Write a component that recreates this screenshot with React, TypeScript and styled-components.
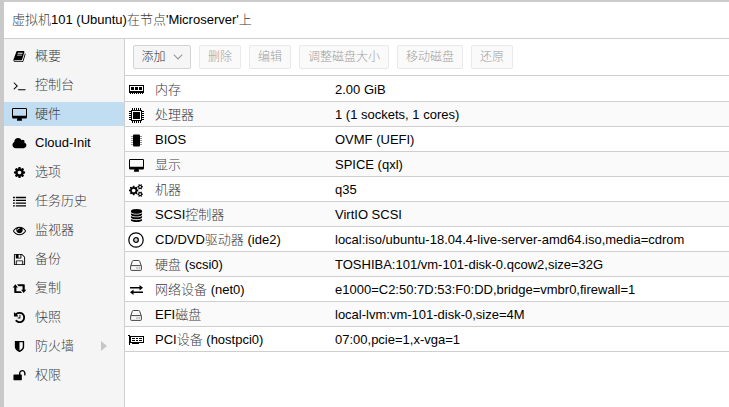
import React from "react";
import styled, { createGlobalStyle } from "styled-components";

const GlobalStyle = createGlobalStyle`
  * { box-sizing: border-box; }
  body {
    margin: 0;
    background: #fff;
    color: #000;
    font: 13px/20px "Liberation Sans", Arial, "Noto Sans CJK SC", sans-serif;
    overflow: hidden;
  }
`;

const Frame = styled.div`
  width: 729px;
  height: 407px;
  display: flex;
  flex-direction: column;
  border-top: 2px solid #cbcbcb;
  border-left: 4px solid #c9c9c9;
  background: #fff;
`;

const Title = styled.header`
  flex: 0 0 37px;
  display: flex;
  align-items: center;
  padding: 0 8px;
  border-bottom: 1px solid #cfcfcf;
  white-space: pre;
`;

const Body = styled.div`
  flex: 1;
  min-height: 0;
  display: flex;
`;

const Sidebar = styled.nav`
  flex: 0 0 121px;
  display: flex;
  flex-direction: column;
  gap: 5px;
  padding-top: 5px;
  background: #f5f5f5;
  border-right: 1px solid #cfcfcf;
`;

const NavItem = styled.div<{ $active?: boolean }>`
  display: flex;
  align-items: center;
  height: 24px;
  background: ${(p) => (p.$active ? "#c1ddf1" : "transparent")};
`;

const NavIcon = styled.span`
  flex: 0 0 31px;
  display: flex;
  justify-content: center;
  svg { display: block; }
`;

const Expander = styled.span`
  margin-left: auto;
  margin-right: 17px;
  border: solid transparent;
  border-width: 5px 0 5px 6px;
  border-left-color: #c6c6c6;
`;

const Main = styled.main`
  flex: 1;
  min-width: 0;
`;

const Toolbar = styled.div`
  display: flex;
  align-items: center;
  gap: 8px;
  height: 37px;
  padding: 0 8px;
  border-bottom: 1px solid #cfcfcf;
`;

const Button = styled.button<{ $width: number }>`
  display: flex;
  align-items: center;
  justify-content: center;
  gap: 7px;
  width: ${(p) => p.$width}px;
  height: 24px;
  padding: 0;
  border: 1px solid #d4d4d4;
  border-radius: 2px;
  background: #f6f6f6;
  color: #333;
  font: 300 12px/22px "Liberation Sans", "Noto Sans CJK SC", sans-serif;
  white-space: nowrap;
  &:disabled {
    border-color: #e9e9e9;
    background: #fafafa;
    color: #a0a0a0;
  }
`;

const Row = styled.div`
  display: grid;
  grid-template-columns: 22px 188px 1fr;
  align-items: center;
  height: 25px;
  padding-top: 2px;
  border-bottom: 1px solid #cfcfcf;
  white-space: pre;
  &:first-child { height: 26px; }
  &:nth-child(even) { background: #fafafa; }
`;

const RowIcon = styled.span`
  display: flex;
  justify-content: center;
  svg { display: block; }
`;

const RowLabel = styled.span`
  padding-left: 8px;
`;

const Value = styled.span`
  display: inline-block;
`;

const Han = styled.span`
  font-weight: 300;
  color: #3c3c3c;
`;

/* Han runs are set lighter than the Latin ones. */
function Mixed({ text }: { text: string }) {
  return (
    <span>
      {text.split(/([\u4e00-\u9fff]+)/).map((part, i) =>
        i % 2 ? <Han key={i}>{part}</Han> : part
      )}
    </span>
  );
}

const GLYPHS = {
  book: "M1703 478q40 57 18 129l-275 906q-19 64-76.5 107.5t-122.5 43.5h-923q-77 0-148.5-53.5t-99.5-131.5q-24-67-2-127 0-4 3-27t4-37q1-8-3-21.5t-3-19.500q2-11 8-21t16.500-23.500 16.500-23.500q23-38 45-91.500t30-91.500q3-10 .5-30t-.5-28q3-11 17-28t17-23q21-36 42-92t25-90q1-9-2.500-32t.5-28q4-13 22-30.500t22-22.500q19-26 42.500-84.500t27.500-96.500q1-8-3-25.500t-2-26.500q2-8 9-18t18-23 17-21q8-12 16.500-30.500t15-35 16-36 19.500-32 26.500-23.500 36-11.500 47.500 5.500l-1 3q38-9 51-9h761q74 0 114 56t18 130l-274 906q-36 119-71.500 153.500t-128.500 34.500h-869q-27 0-38 15-11 16-1 43 24 70 144 70h923q29 0 56-15.500t35-41.500l300-987q7-22 5-57 38 15 59 43zm-1064 2q-4 13 2 22.500t20 9.500h608q13 0 25.500-9.500t16.500-22.500l21-64q4-13-2-22.500t-20-9.500h-608q-13 0-25.500 9.500t-16.500 22.500zm-83 256q-4 13 2 22.500t20 9.500h608q13 0 25.500-9.500t16.500-22.500l21-64q4-13-2-22.500t-20-9.500h-608q-13 0-25.500 9.500t-16.500 22.500z",
  terminal: "M649 983l-466 466q-10 10-23 10t-23-10l-50-50q-10-10-10-23t10-23l393-393-393-393q-10-10-10-23t10-23l50-50q10-10 23-10t23 10l466 466q10 10 10 23t-10 23zm1079 457v64q0 14-9 23t-23 9h-960q-14 0-23-9t-9-23v-64q0-14 9-23t23-9h960q14 0 23 9t9 23z",
  cloud: "M1984 1152q0 159-112.5 271.5t-271.5 112.5h-1088q-185 0-316.5-131.5t-131.5-316.5q0-132 71-241.500t187-163.500q-2-28-2-43 0-212 150-362t362-150q158 0 286.500 88t187.500 230q70-62 166-62 106 0 181 75t75 181q0 75-41 138 129 30 213 134.500t84 239.500z",
  cog: "M1152 896q0-106-75-181t-181-75-181 75-75 181 75 181 181 75 181-75 75-181zm512-109v222q0 12-8 23t-20 13l-185 28q-19 54-39 91 35 50 107 138 10 12 10 25t-9 23q-27 37-99 108t-94 71q-12 0-26-9l-138-108q-44 23-91 38-16 136-29 186-7 28-36 28h-222q-14 0-24.5-8.500t-11.500-21.500l-28-184q-49-16-90-37l-141 107q-10 9-25 9-14 0-25-11-126-114-165-168-7-10-7-23 0-12 8-23 15-21 51-66.500t54-70.500q-27-50-41-99l-183-27q-13-2-21-12.500t-8-23.500v-222q0-12 8-23t19-13l186-28q14-46 39-92-40-57-107-138-10-12-10-24 0-10 9-23 26-36 98.500-107.500t94.500-71.500q13 0 26 10l138 107q44-23 91-38 16-136 29-186 7-28 36-28h222q14 0 24.500 8.500t11.500 21.500l28 184q49 16 90 37l142-107q9-9 24-9 13 0 25 10 129 119 165 170 7 8 7 22 0 12-8 23-15 21-51 66.500t-54 70.500q26 50 41 98l183 28q13 2 21 12.500t8 23.500z",
  cogs: "M896 896q0-106-75-181t-181-75-181 75-75 181 75 181 181 75 181-75 75-181zm768 512q0-52-38-90t-90-38-90 38-38 90q0 53 37.5 90.5t90.5 37.5 90.5-37.5 37.5-90.5zm0-1024q0-52-38-90t-90-38-90 38-38 90q0 53 37.5 90.5t90.5 37.5 90.5-37.5 37.5-90.5zm-384 421v185q0 10-7 19.5t-16 10.5l-155 24q-11 35-32 76 34 48 90 115 7 11 7 20 0 12-7 19-23 30-82.5 89.5t-78.5 59.5q-11 0-21-7l-115-90q-37 19-77 31-11 108-23 155-7 24-30 24h-186q-11 0-20-7.5t-10-17.5l-23-153q-34-10-75-31l-118 89q-7 7-20 7-11 0-21-8-144-133-144-160 0-9 7-19 10-14 41-53t47-61q-23-44-35-82l-152-24q-10-1-17-9.5t-7-19.5v-185q0-10 7-19.5t16-10.5l155-24q11-35 32-76-34-48-90-115-7-11-7-20 0-12 7-20 22-30 82-89t79-59q11 0 21 7l115 90q34-18 77-32 11-108 23-154 7-24 30-24h186q11 0 20 7.5t10 17.5l23 153q34 10 75 31l118-89q8-7 20-7 11 0 21 8 144 133 144 160 0 8-7 19-12 16-42 54t-45 60q23 48 34 82l152 23q10 2 17 10.5t7 19.5zm640 533v140q0 16-149 31-12 27-30 52 51 113 51 138 0 4-4 7-122 71-124 71-8 0-46-47t-52-68q-20 2-30 2t-30-2q-14 21-52 68t-46 47q-2 0-124-71-4-3-4-7 0-25 51-138-18-25-30-52-149-15-149-31v-140q0-16 149-31 13-29 30-52-51-113-51-138 0-4 4-7 4-2 35-20t59-34 30-16q8 0 46 46.500t52 67.500q20-2 30-2t30 2q51-71 92-112l6-2q4 0 124 70 4 3 4 7 0 25-51 138 17 23 30 52 149 15 149 31zm0-1024v140q0 16-149 31-12 27-30 52 51 113 51 138 0 4-4 7-122 71-124 71-8 0-46-47t-52-68q-20 2-30 2t-30-2q-14 21-52 68t-46 47q-2 0-124-71-4-3-4-7 0-25 51-138-18-25-30-52-149-15-149-31v-140q0-16 149-31 13-29 30-52-51-113-51-138 0-4 4-7 4-2 35-20t59-34 30-16q8 0 46 46.500t52 67.500q20-2 30-2t30 2q51-71 92-112l6-2q4 0 124 70 4 3 4 7 0 25-51 138 17 23 30 52 149 15 149 31z",
  list: "M0 256h256v192H0zM384 256h1408v192H384zM0 640h256v192H0zM384 640h1408v192H384zM0 1024h256v192H0zM384 1024h1408v192H384zM0 1408h256v192H0zM384 1408h1408v192H384z",
  eye: "M1664 960q-152-236-381-353 61 104 61 225 0 185-131.5 316.5t-316.5 131.5-316.5-131.5-131.5-316.5q0-121 61-225-229 117-381 353 133 205 333.5 326.5t434.5 121.5 434.5-121.5 333.5-326.5zm-720-384q0-20-14-34t-34-14q-125 0-214.5 89.500t-89.500 214.500q0 20 14 34t34 14 34-14 14-34q0-86 61-147t147-61q20 0 34-14t14-34zm848 384q0 34-20 69-140 230-376.500 368.500t-499.500 138.500-499.500-139-376.500-368q-20-35-20-69t20-69q140-229 376.500-368t499.500-139 499.500 139 376.500 368q20 35 20 69z",
  save: "M512 1536h768v-384h-768v384zm896 0h128v-896q0-14-10-38.500t-20-34.500l-281-281q-10-10-34-20t-39-10v416q0 40-28 68t-68 28h-576q-40 0-68-28t-28-68v-416h-128v1280h128v-416q0-40 28-68t68-28h832q40 0 68 28t28 68v416zm-384-928v-320q0-13-9.500-22.500t-22.500-9.500h-192q-13 0-22.500 9.500t-9.500 22.500v320q0 13 9.500 22.500t22.500 9.500h192q13 0 22.500-9.500t9.500-22.500zm640 32v928q0 40-28 68t-68 28h-1344q-40 0-68-28t-28-68v-1344q0-40 28-68t68-28h928q40 0 88 20t76 48l280 280q28 28 48 76t20 88z",
  retweet: "M320 320L-40 760h210v660q0 90 90 90h1000l-200-250H470V760h210zM560 320l200 250h560v500h-210l360 440 360-440h-210V410q0-90-90-90z",
  history: "M1664 896q0 156-61 298t-164 245-245 164-298 61q-172 0-327-72.500t-264-204.500q-7-10-6.500-22.500t8.500-20.500l137-138q10-9 25-9 16 2 23 12 73 95 179 147t225 52q104 0 198.500-40.500t163.500-109.500 109.500-163.500 40.500-198.500-40.500-198.500-109.500-163.500-163.500-109.500-198.500-40.500q-98 0-188 35.500t-160 101.500l137 138q31 30 14 69-17 40-59 40h-448q-26 0-45-19t-19-45v-448q0-42 40-59 39-17 69 14l130 129q107-101 244.500-156.500t284.500-55.500q156 0 298 61t245 164 164 245 61 298zM1024 544v448q0 14-9 23t-23 9h-320q-14 0-23-9t-9-23v-64q0-14 9-23t23-9h224v-352q0-14 9-23t23-9h64q14 0 23 9t9 23z",
  shield: "M1344 960v-640h-448v1137q119-63 213-137 235-184 235-360zm192-768v768q0 86-33.500 170.500t-83 150-118 127.500-126.500 103-121 77.500-89.500 49.500-42.500 20q-12 6-26 6t-26-6q-16-7-42.500-20t-89.500-49.500-121-77.500-126.500-103-118-127.500-83-150-33.500-170.500v-768q0-26 19-45t45-19h1152q26 0 45 19t19 45z",
  unlock: "M1728 576v256q0 26-19 45t-45 19h-64q-26 0-45-19t-19-45v-256q0-106-75-181t-181-75-181 75-75 181v192h96q40 0 68 28t28 68v576q0 40-28 68t-68 28h-960q-40 0-68-28t-28-68v-576q0-40 28-68t68-28h672v-192q0-185 131.5-316.500t316.500-131.500 316.500 131.500 131.500 316.500z",
  database: "M896 768q237 0 443-43t325-127v170q0 69-103 128t-280 93.500-385 34.500-385-34.500-280-93.500-103-128v-170q119 84 325 127t443 43zm0 768q237 0 443-43t325-127v170q0 69-103 128t-280 93.500-385 34.500-385-34.500-280-93.500-103-128v-170q119 84 325 127t443 43zm0-384q237 0 443-43t325-127v170q0 69-103 128t-280 93.500-385 34.500-385-34.500-280-93.500-103-128v-170q119 84 325 127t443 43zm0-1152q208 0 385 34.500t280 93.500 103 128v128q0 69-103 128t-280 93.500-385 34.500-385-34.500-280-93.500-103-128v-128q0-69 103-128t280-93.500 385-34.500z",
};

const WIDTHS: Partial<Record<keyof typeof GLYPHS, number>> = { cloud: 2048, cogs: 1920 };

const GlyphSvg = styled.svg`
  overflow: visible;
`;

function Glyph({ name, size = 13 }: { name: keyof typeof GLYPHS; size?: number }) {
  const w = WIDTHS[name] ?? 1792;
  return (
    <GlyphSvg width={(size * w) / 1792} height={size} viewBox={`0 0 ${w} 1792`}>
      <path d={GLYPHS[name]} />
    </GlyphSvg>
  );
}

const Desktop = () => (
  <svg width="15" height="13" viewBox="0 0 15 13">
    <path
      fillRule="evenodd"
      d="M1.2 0h12.600q1.200 0 1.200 1.200v8q0 1.200-1.200 1.200H9.500l.6 1.600q.2.800-.6.800h-4q-.8 0-.6-.8l.6-1.600H1.200Q0 10.400 0 9.200v-8Q0 0 1.200 0zM1 1v6.800h13V1z"
    />
  </svg>
);

const Memory = () => (
  <svg width="15" height="9" viewBox="0 0 15 9" shapeRendering="crispEdges">
    <path fillRule="evenodd" d="M0 0h15v8H0zM1 1v5h13V1z" />
    <path d="M2 2h3v3H2zM6 2h3v3H6zM10 2h3v3h-3zM1 8h1v1H1zM3 8h1v1H3zM5 8h1v1H5zM7 8h1v1H7zM9 8h1v1H9zM11 8h1v1h-1zM13 8h1v1h-1z" />
  </svg>
);

const Cpu = () => (
  <svg width="15" height="15" viewBox="0 0 15 15" shapeRendering="crispEdges">
    <path fillRule="evenodd" d="M2 2h11v11H2zM3 3v9h9V3z" />
    <path d="M4 4h7v7H4z" />
    <path
      stroke="#000"
      strokeDasharray="1 1"
      fill="none"
      d="M3 1h10M3 14h10M1 3v10M14 3v10"
      strokeWidth="2"
    />
  </svg>
);

const Chip = () => (
  <svg width="11" height="13" viewBox="0 0 11 13">
    <rect x="2" y=".5" width="7" height="12" rx="1" />
    <path stroke="#777" strokeDasharray="1 1" d="M1 2v9M10 2v9" strokeWidth="1.500" />
  </svg>
);

const Disc = () => (
  <svg width="16" height="16" viewBox="0 0 16 16" fill="none" stroke="#000">
    <circle cx="8" cy="8" r="7.200" strokeWidth="1.200" />
    <circle cx="8" cy="8" r="2.300" strokeWidth="1.300" />
    <circle cx="8" cy="8" r=".5" fill="#000" stroke="none" />
  </svg>
);

const Drive = () => (
  <svg width="12" height="11" viewBox="0 0 12 11" fill="none" stroke="#444">
    <path d="M.6 6.500v3q0 .9.900.9h9q.9 0 .9-.9v-3q0-.9-.9-.9h-9q-.9 0-.9.900L2.300 1.300q.3-.8 1-.8h5.400q.7 0 1 .8l1.700 5" />
    <path d="M6.500 8h1M8.700 8h1" strokeWidth="1.200" />
  </svg>
);

const Exchange = () => (
  <svg width="13" height="10" viewBox="0 0 13 10">
    <path d="M0 2h9.500V0L13 2.800 9.500 5.500V3.500H0zM13 6.500H3.500v-2L0 7.200 3.500 10V8H13z" />
  </svg>
);

const PciCard = () => (
  <svg width="16" height="10" viewBox="0 0 16 10" shapeRendering="crispEdges">
    <path d="M0 0h2v10H1V1H0z" />
    <path fillRule="evenodd" d="M2 1h14v7H2zM3 2v5h12V2z" />
    <path d="M4 3h3v1H4zM4 5h3v1H4zM8 3h2v1H8zM8 5h2v1H8zM11 3h3v1h-3zM11 5h3v1h-3zM4 8h7v1H4z" />
  </svg>
);

const Chevron = () => (
  <svg width="10" height="6" viewBox="0 0 10 6" fill="none" stroke="#999" strokeWidth="1.100">
    <path d="M.8.7L5 5 9.200.7" />
  </svg>
);

const NAV = [
  { label: "概要", icon: <Glyph name="book" /> },
  { label: "控制台", icon: <Glyph name="terminal" /> },
  { label: "硬件", icon: <Desktop />, active: true },
  { label: "Cloud-Init", icon: <Glyph name="cloud" /> },
  { label: "选项", icon: <Glyph name="cog" /> },
  { label: "任务历史", icon: <Glyph name="list" /> },
  { label: "监视器", icon: <Glyph name="eye" /> },
  { label: "备份", icon: <Glyph name="save" /> },
  { label: "复制", icon: <Glyph name="retweet" /> },
  { label: "快照", icon: <Glyph name="history" /> },
  { label: "防火墙", icon: <Glyph name="shield" />, expandable: true },
  { label: "权限", icon: <Glyph name="unlock" /> },
];

const ACTIONS = [
  { label: "删除", width: 42 },
  { label: "编辑", width: 42 },
  { label: "调整磁盘大小", width: 90 },
  { label: "移动磁盘", width: 66 },
  { label: "还原", width: 42 },
];

const HARDWARE = [
  { icon: <Memory />, label: "内存", value: "2.00 GiB" },
  { icon: <Cpu />, label: "处理器", value: "1 (1 sockets, 1 cores)" },
  { icon: <Chip />, label: "BIOS", value: "OVMF (UEFI)" },
  { icon: <Desktop />, label: "显示", value: "SPICE (qxl)" },
  { icon: <Glyph name="cogs" />, label: "机器", value: "q35" },
  { icon: <Glyph name="database" />, label: "SCSI控制器", value: "VirtIO SCSI" },
  {
    icon: <Disc />,
    label: "CD/DVD驱动器 (ide2)",
    value: "local:iso/ubuntu-18.04.4-live-server-amd64.iso,media=cdrom",
  },
  { icon: <Drive />, label: "硬盘 (scsi0)", value: "TOSHIBA:101/vm-101-disk-0.qcow2,size=32G" },
  {
    icon: <Exchange />,
    label: "网络设备 (net0)",
    value: "e1000=C2:50:7D:53:F0:DD,bridge=vmbr0,firewall=1",
  },
  { icon: <Drive />, label: "EFI磁盘", value: "local-lvm:vm-101-disk-0,size=4M" },
  { icon: <PciCard />, label: "PCI设备 (hostpci0)", value: "07:00,pcie=1,x-vga=1" },
];

export default function App() {
  return (
    <>
      <GlobalStyle />
      <Frame>
        <Title>
          <Mixed text="虚拟机101 (Ubuntu)在节点'Microserver'上" />
        </Title>
        <Body>
          <Sidebar>
            {NAV.map((item) => (
              <NavItem key={item.label} $active={item.active}>
                <NavIcon>{item.icon}</NavIcon>
                <Mixed text={item.label} />
                {item.expandable && <Expander />}
              </NavItem>
            ))}
          </Sidebar>
          <Main>
            <Toolbar>
              <Button $width={58}>
                添加
                <Chevron />
              </Button>
              {ACTIONS.map((a) => (
                <Button key={a.label} $width={a.width} disabled>
                  {a.label}
                </Button>
              ))}
            </Toolbar>
            <div>
              {HARDWARE.map((row) => (
                <Row key={row.label}>
                  <RowIcon>{row.icon}</RowIcon>
                  <RowLabel>
                    <Mixed text={row.label} />
                  </RowLabel>
                  <Value>{row.value}</Value>
                </Row>
              ))}
            </div>
          </Main>
        </Body>
      </Frame>
    </>
  );
}
